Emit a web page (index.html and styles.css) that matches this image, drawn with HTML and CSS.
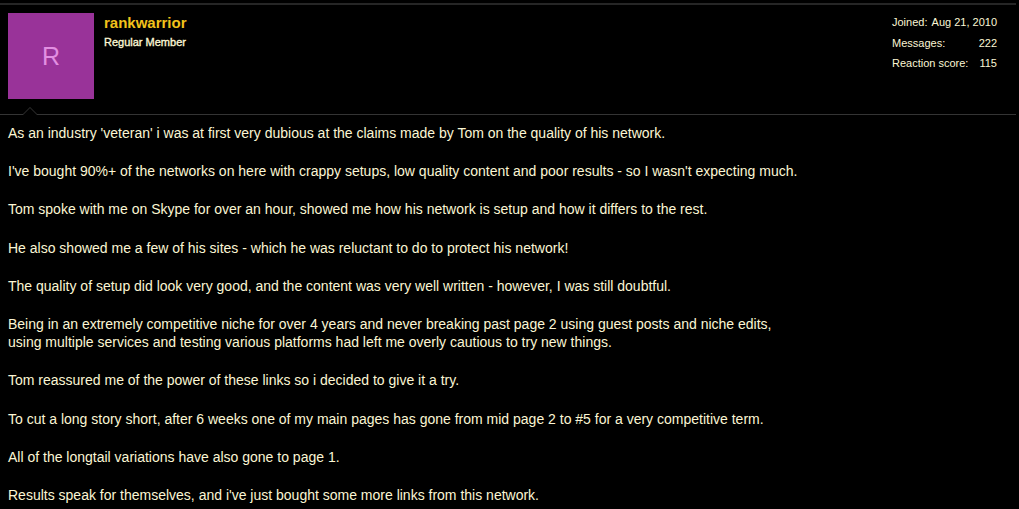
FILE: index.html
```html
<!DOCTYPE html>
<html lang="en">
<head>
  <meta charset="UTF-8">
  <title>rankwarrior - review</title>
  <link rel="stylesheet" href="styles.css">
</head>
<body>
  <div class="post">
    <div class="post-header">
      <div class="avatar">R</div>
      <div class="user-info">
        <div class="username">rankwarrior</div>
        <div class="user-title">Regular Member</div>
      </div>
      <dl class="user-stats">
        <div class="stat-row"><dt>Joined:</dt><dd>Aug 21, 2010</dd></div>
        <div class="stat-row"><dt>Messages:</dt><dd>222</dd></div>
        <div class="stat-row"><dt>Reaction score:</dt><dd>115</dd></div>
      </dl>
    </div>
    <div class="post-body">
      <span class="arrow"></span>
      <p>As an industry 'veteran' i was at first very dubious at the claims made by Tom on the quality of his network.</p>
      <p>I've bought 90%+ of the networks on here with crappy setups, low quality content and poor results - so I wasn't expecting much.</p>
      <p>Tom spoke with me on Skype for over an hour, showed me how his network is setup and how it differs to the rest.</p>
      <p>He also showed me a few of his sites - which he was reluctant to do to protect his network!</p>
      <p>The quality of setup did look very good, and the content was very well written - however, I was still doubtful.</p>
      <p>Being in an extremely competitive niche for over 4 years and never breaking past page 2 using guest posts and niche edits,<br>using multiple services and testing various platforms had left me overly cautious to try new things.</p>
      <p>Tom reassured me of the power of these links so i decided to give it a try.</p>
      <p>To cut a long story short, after 6 weeks one of my main pages has gone from mid page 2 to #5 for a very competitive term.</p>
      <p>All of the longtail variations have also gone to page 1.</p>
      <p>Results speak for themselves, and i've just bought some more links from this network.</p>
    </div>
  </div>
</body>
</html>
```

FILE: styles.css
```css
body {
  margin: 0;
  padding: 0;
  background-color: #000000;
  font-family: "Liberation Sans", Arial, sans-serif;
  color: #fbf6d4;
}

.post {
  margin-top: 3px;
  border-top: 2px solid #262626;
  width: 1016px;
}

.post-header {
  display: flex;
  align-items: flex-start;
  padding: 8px 8px 15px 8px;
  border-bottom: 1px solid #343434;
}

.avatar {
  width: 86px;
  height: 86px;
  background-color: #993399;
  color: #e28fe2;
  font-size: 25px;
  display: flex;
  align-items: center;
  justify-content: center;
  flex-shrink: 0;
}

.user-info {
  margin-left: 10px;
  padding-top: 1px;
  flex-grow: 1;
}

.username {
  color: #f2c21b;
  font-weight: bold;
  font-size: 15px;
  line-height: 18px;
}

.user-title {
  font-size: 11px;
  margin-top: 3px;
  line-height: 14px;
  -webkit-text-stroke: 0.35px #fbf6d4;
}

.user-stats {
  margin: 2px 11px 0 0;
  width: 105px;
  font-size: 11px;
  white-space: nowrap;
}

.stat-row {
  display: flex;
  justify-content: space-between;
  gap: 4px;
  height: 20.5px;
  line-height: 14px;
}

.stat-row dd {
  margin: 0;
}

.post-body {
  position: relative;
  padding: 9px 8px;
  font-size: 14px;
  line-height: 18.2px;
}

.post-body p {
  margin: 0 0 20px 0;
}

.arrow {
  position: absolute;
  top: -8px;
  left: 22px;
  width: 0;
  height: 0;
  border-left: 8px solid transparent;
  border-right: 8px solid transparent;
  border-bottom: 8px solid #343434;
}

.arrow::after {
  content: "";
  position: absolute;
  top: 1px;
  left: -7px;
  border-left: 7px solid transparent;
  border-right: 7px solid transparent;
  border-bottom: 7px solid #000000;
}
```
